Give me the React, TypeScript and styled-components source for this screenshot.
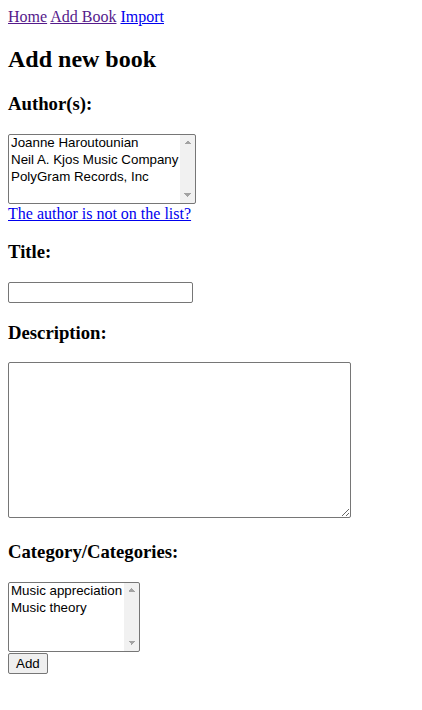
import styled, { createGlobalStyle } from "styled-components";

const GlobalStyle = createGlobalStyle`
  body {
    margin: 8px;
    font-family: "Liberation Serif", "Times New Roman", serif;
    font-size: 16px;
    color: #000;
    background: #fff;
  }
`;

const Nav = styled.div`
  line-height: normal;
`;

const NavLink = styled.a<{ $visited?: boolean }>`
  color: ${(p) => (p.$visited ? "#551a8b" : "#0000ee")};
  text-decoration: underline;
`;

const PageTitle = styled.h2`
  font-size: 1.5em;
  margin: 0.83em 0;
`;

const Field = styled.div``;

const Label = styled.h3`
  font-size: 1.17em;
  margin: 1em 0;
`;

const arrow = "#a3a3a3";
const track = "#f1f1f1";

// the headless browser hides real scrollbars, so the listbox gutter is painted
const ListBox = styled.select<{ $width: number }>`
  box-sizing: border-box;
  width: ${(p) => p.$width}px;
  height: 70px;
  margin-bottom: 1px;
  font-family: "Liberation Sans", Arial, sans-serif;
  font-size: 13.33px;
  border: 1px solid #767676;
  border-radius: 2px;
  padding: 0;
  color: #000;
  vertical-align: bottom;
  background-color: #fff;
  background-repeat: no-repeat;
  background-image:
    linear-gradient(to top left, ${arrow} 50%, transparent 50%),
    linear-gradient(to top right, ${arrow} 50%, transparent 50%),
    linear-gradient(to bottom left, ${arrow} 50%, transparent 50%),
    linear-gradient(to bottom right, ${arrow} 50%, transparent 50%),
    linear-gradient(${track}, ${track});
  background-size: 4px 4px, 4px 4px, 4px 4px, 4px 4px, 15px 100%;
  background-position:
    right 7.5px top 5px,
    right 3.5px top 5px,
    right 7.5px bottom 6px,
    right 3.5px bottom 6px,
    right top;
`;

const HelpLink = styled.a`
  color: #0000ee;
  text-decoration: underline;
`;

const TextInput = styled.input`
  box-sizing: border-box;
  width: 185px;
  height: 21px;
  font-family: "Liberation Sans", Arial, sans-serif;
  font-size: 13.33px;
  border: 1px solid #767676;
  border-radius: 2px;
  padding: 1px 2px;
`;

const TextBox = styled.textarea`
  box-sizing: border-box;
  width: 343px;
  height: 156px;
  font-family: "Liberation Mono", monospace;
  font-size: 13.33px;
  border: 1px solid #767676;
  border-radius: 2px;
  padding: 2px;
`;

const Button = styled.button`
  box-sizing: border-box;
  height: 21px;
  font-family: "Liberation Sans", Arial, sans-serif;
  font-size: 13.33px;
  padding: 1px 7px;
  border: 1px solid #767676;
  border-radius: 2px;
  background: #efefef;
  color: #000;
`;

const authors = [
  "Joanne Haroutounian",
  "Neil A. Kjos Music Company",
  "PolyGram Records, Inc",
];

const categories = ["Music appreciation", "Music theory"];

export default function App() {
  return (
    <>
      <GlobalStyle />
      <Nav>
        <NavLink href="#" $visited>
          Home
        </NavLink>{" "}
        <NavLink href="#" $visited>
          Add Book
        </NavLink>{" "}
        <NavLink href="#">Import</NavLink>
      </Nav>
      <PageTitle>Add new book</PageTitle>
      <form onSubmit={(e) => e.preventDefault()}>
        <Field>
          <Label>Author(s):</Label>
          <ListBox multiple size={4} $width={188}>
            {authors.map((a) => (
              <option key={a} value={a}>
                {a}
              </option>
            ))}
          </ListBox>
          <br />
          <HelpLink href="#">The author is not on the list?</HelpLink>
        </Field>
        <Field>
          <Label>Title:</Label>
          <TextInput type="text" />
        </Field>
        <Field>
          <Label>Description:</Label>
          <TextBox />
        </Field>
        <Field>
          <Label>Category/Categories:</Label>
          <ListBox multiple size={4} $width={132}>
            {categories.map((c) => (
              <option key={c} value={c}>
                {c}
              </option>
            ))}
          </ListBox>
        </Field>
        <Button type="submit">Add</Button>
      </form>
    </>
  );
}
